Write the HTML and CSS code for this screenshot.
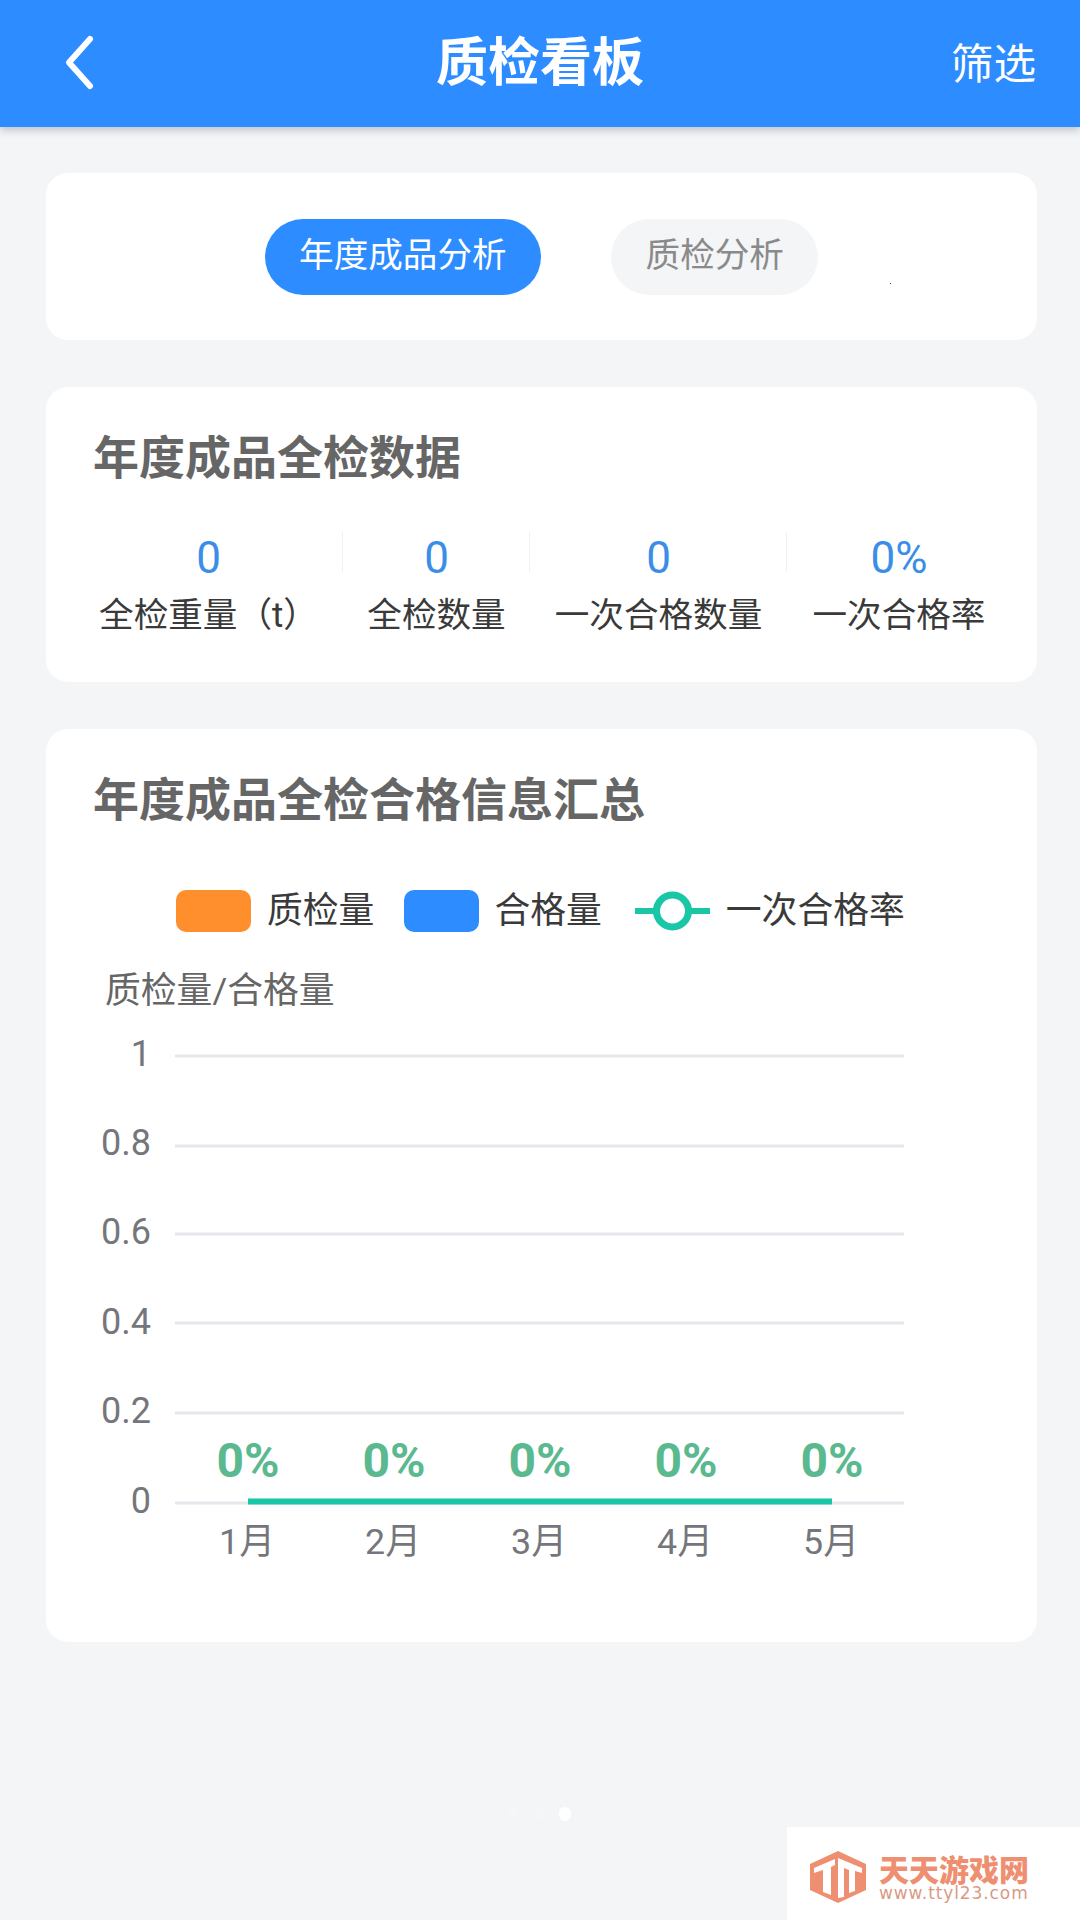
FILE: index.html
```html
<!DOCTYPE html>
<html lang="zh-CN">
    <head>
        <meta charset="utf-8">
        <title>质检看板</title>
        <link rel="stylesheet" href="styles.css">
    </head>

    <body>
        <header class="topbar">
            <span class="back">
                <svg width="40" height="60" viewBox="0 0 40 60">
                    <path d="M32 5 L11 28.5 L32 52" class="backline"/>
                </svg>
            </span>
            <h1 class="pagetitle">质检看板</h1>
            <span class="filter">筛选</span>
        </header>

        <main class="content">
            <section class="card tabcard">
                <span class="pill pill-on">年度成品分析</span>
                <span class="pill pill-off">质检分析</span>
                <i class="speck"></i>
            </section>

            <section class="card statcard">
                <h2 class="cardtitle">年度成品全检数据</h2>
                <div class="stats">
                    <div class="stat"><b>0</b><span>全检重量（t）</span></div>
                    <div class="stat"><b>0</b><span>全检数量</span></div>
                    <div class="stat"><b>0</b><span>一次合格数量</span></div>
                    <div class="stat"><b>0%</b><span>一次合格率</span></div>
                </div>
            </section>

            <section class="card chartcard">
                <h2 class="cardtitle">年度成品全检合格信息汇总</h2>

                <div class="legend">
                    <span class="swatch orange"></span><span class="legendtext first">质检量</span>
                    <span class="swatch blue"></span><span class="legendtext second">合格量</span>
                    <svg class="legendline" width="75" height="42" viewBox="0 0 75 42">
                        <path d="M0 21 H75" class="rate"/>
                        <circle cx="37.5" cy="21" r="16" class="ratedot"/>
                    </svg>
                    <span class="legendtext">一次合格率</span>
                </div>

                <svg class="chart" width="991" height="682" viewBox="0 0 991 682">
                    <text x="59" y="43" class="axisname">质检量/合格量</text>

                    <path d="M129 96 H858" class="grid"/>
                    <path d="M129 186 H858" class="grid"/>
                    <path d="M129 274 H858" class="grid"/>
                    <path d="M129 363 H858" class="grid"/>
                    <path d="M129 453 H858" class="grid"/>
                    <path d="M129 543 H858" class="grid"/>

                    <text x="105" y="106" class="ylabel">1</text>
                    <text x="105" y="195" class="ylabel">0.8</text>
                    <text x="105" y="284" class="ylabel">0.6</text>
                    <text x="105" y="374" class="ylabel">0.4</text>
                    <text x="105" y="463" class="ylabel">0.2</text>
                    <text x="105" y="553" class="ylabel">0</text>

                    <path d="M202 541.5 H786" class="rate"/>

                    <text x="202" y="517" class="pct">0%</text>
                    <text x="348" y="517" class="pct">0%</text>
                    <text x="494" y="517" class="pct">0%</text>
                    <text x="640" y="517" class="pct">0%</text>
                    <text x="786" y="517" class="pct">0%</text>

                    <text x="201" y="594" class="xlabel">1月</text>
                    <text x="347" y="594" class="xlabel">2月</text>
                    <text x="493" y="594" class="xlabel">3月</text>
                    <text x="639" y="594" class="xlabel">4月</text>
                    <text x="785" y="594" class="xlabel">5月</text>
                </svg>
            </section>
        </main>

        <div class="dots"><i></i><i></i><i class="dot-on"></i></div>

        <div class="watermark">
            <svg width="58" height="52" viewBox="0 0 58 52">
                <path d="M29 0 L57 13 V39 L29 52 L1 39 V13 Z" class="logohex"/>
                <path d="M5 17 L26 8 V14 L22 16 V44 L14 41 V19 L5 22 Z" class="logot"/>
                <path d="M29 7 L53 17 V22 L46 20 V40 L40 42 V19 L35 17 V46 L29 47 Z" class="logot"/>
            </svg>
            <div class="wmtext">
                <div class="wmname">天天游戏网</div>
                <div class="wmurl">www.ttyl23.com</div>
            </div>
        </div>
    </body>
</html>
```

FILE: styles.css
```css
* {box-sizing: border-box;}
BODY {margin: 0; width: 1080px; height: 1920px; position: relative; overflow: hidden; background-color: #f3f5f7; font-family: Roboto, "Noto Sans CJK SC", sans-serif; color: #333333;}

.topbar {height: 127px; background-color: #2d8cff; color: #ffffff; display: grid; grid-template-columns: 1fr auto 1fr; align-items: center; padding: 0 44px; box-shadow: 0 3px 8px rgba(60, 70, 90, 0.3);}
.back {display: flex; margin-left: 14px;}
.backline {fill: none; stroke: #ffffff; stroke-width: 6; stroke-linecap: round; stroke-linejoin: round;}
.pagetitle {margin: 0; font-size: 52px; line-height: 60px; font-weight: 700;}
.filter {justify-self: end; font-size: 42.6px; line-height: 50px;}

.content {display: flex; flex-direction: column; gap: 47px; padding: 46px 43px 0 46px;}
.card {background-color: #ffffff; border-radius: 22px;}
.cardtitle {margin: 0 0 0 47px; font-size: 46px; line-height: 56px; font-weight: 700; color: #666666;}

.tabcard {height: 167px; display: flex; justify-content: center; align-items: center; gap: 70px; position: relative;}
.pill {height: 76px; line-height: 72px; padding: 0 34.5px; border-radius: 38px; font-size: 34.6px;}
.pill-on {background-color: #2d8cff; color: #ffffff;}
.pill-off {background-color: #f3f5f7; color: #8a8a8a;}
.speck {position: absolute; left: 844px; top: 110px; width: 1px; height: 1px; background-color: #555555;}

.statcard {height: 295px; padding-top: 43px;}
.stats {display: grid; grid-template-columns: 269px 187px 257px 224px; margin: 44px 0 0 27px;}
.stat {display: flex; flex-direction: column; align-items: center; padding-left: 2px; background: linear-gradient(#f0f1f3, #f0f1f3) left 2px / 1px 40px no-repeat;}
.stat:first-child {background: none;}
.stat b {font-size: 44px; line-height: 56px; font-weight: 400; color: #3b8ee8;}
.stat span {font-size: 34.6px; line-height: 58px; white-space: nowrap; color: #3a3a3a;}

.chartcard {height: 913px; padding-top: 43px;}
.legend {display: flex; align-items: center; margin: 62px 0 0 130px; height: 42px;}
.swatch {width: 75px; height: 42px; border-radius: 10px;}
.orange {background-color: #ff8f2d;}
.blue {background-color: #2d8cff;}
.legendtext {font-size: 35.8px; line-height: 42px; margin: 0 31px 0 16px; color: #3a3a3a;}
.legendtext.first {margin-right: 30px;}
.legendtext.second {margin: 0 33px 0 15px;}
.legendtext:last-child {margin-right: 0;}
.chart {display: block; margin-top: 28px;}

.rate {fill: none; stroke: #19c6a6; stroke-width: 6;}
.ratedot {fill: #ffffff; stroke: #19c6a6; stroke-width: 7;}
.grid {fill: none; stroke: #e6e7ec; stroke-width: 3;}
.axisname {font-size: 35.8px; fill: #666666;}
.ylabel {font-size: 36px; fill: #75767c; text-anchor: end;}
.xlabel {font-size: 35.8px; fill: #75767c; text-anchor: middle;}
.pct {font-size: 48px; font-weight: 700; fill: #5bb98f; text-anchor: middle;}

.dots {position: absolute; left: 507px; top: 1807px; display: flex; gap: 14px;}
.dots i {width: 12px; height: 14px; border-radius: 6px; background-color: #f5f6f8;}
.dots .dot-on {background-color: #ffffff;}

.watermark {position: absolute; left: 787px; top: 1827px; width: 293px; height: 93px; background-color: #ffffff; display: flex; align-items: center; gap: 12px; padding: 6px 0 0 22px;}
.logohex {fill: #ee8f71;}
.logot {fill: #ffffff;}
.wmtext {display: flex; flex-direction: column;}
.wmname {font-family: "Noto Sans CJK SC", sans-serif; font-size: 30px; line-height: 32px; font-weight: 900; color: #ee8f71;}
.wmurl {font-family: "DejaVu Sans", sans-serif; font-size: 17px; line-height: 18px; letter-spacing: 0.9px; color: #d99a85; white-space: nowrap;}
```
